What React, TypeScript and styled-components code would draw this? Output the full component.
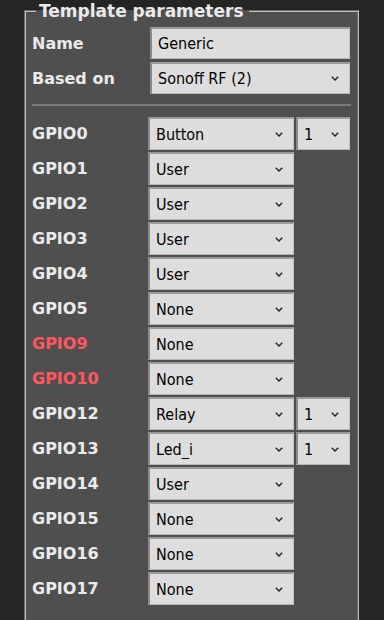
import React from "react";
import styled, { createGlobalStyle } from "styled-components";

const GlobalStyle = createGlobalStyle`
  html, body {
    margin: 0;
    padding: 0;
    background: #252525;
  }
  body {
    font-family: "DejaVu Sans", Verdana, sans-serif;
    color: #eaeaea;
  }
`;

type Gpio = { name: string; value: string; index?: string; warn?: boolean };

const gpios: Gpio[] = [
  { name: "GPIO0", value: "Button", index: "1" },
  { name: "GPIO1", value: "User" },
  { name: "GPIO2", value: "User" },
  { name: "GPIO3", value: "User" },
  { name: "GPIO4", value: "User" },
  { name: "GPIO5", value: "None" },
  { name: "GPIO9", value: "None", warn: true },
  { name: "GPIO10", value: "None", warn: true },
  { name: "GPIO12", value: "Relay", index: "1" },
  { name: "GPIO13", value: "Led_i", index: "1" },
  { name: "GPIO14", value: "User" },
  { name: "GPIO15", value: "None" },
  { name: "GPIO16", value: "None" },
  { name: "GPIO17", value: "None" },
];

const Page = styled.div`
  padding: 1px 25px 0 24px;
  height: 620px;
  overflow: hidden;
  box-sizing: border-box;
`;

const Fieldset = styled.fieldset`
  margin: 0;
  padding: 6px 6px 20px 6px;
  background: #4f4f4f;
  border: 2px groove #c0c0c0;
  min-height: 640px;
`;

const Legend = styled.legend`
  margin-left: 4px;
  padding: 0 5px 0 3px;
  font-weight: bold;
  font-size: 17px;
  color: #eaeaea;
  line-height: 20px;
`;

const Row = styled.div`
  display: flex;
  align-items: center;
  gap: 2px;
  height: 33px;
  margin-bottom: 2px;
`;

const TopRow = styled(Row)`
  height: 32px;
  margin-bottom: 3px;
`;

const Label = styled.div<{ $warn?: boolean; $wide?: boolean }>`
  box-sizing: border-box;
  width: ${(p) => (p.$wide ? "116px" : "114px")};
  flex: none;
  font-weight: bold;
  font-size: 16px;
  color: ${(p) => (p.$warn ? "#ff5661" : "#eaeaea")};
`;

const Field = styled.input`
  box-sizing: border-box;
  width: 200px;
  height: 32px;
  margin: 0;
  padding: 0 6px;
  background: #dddddd;
  border: none;
  border-top: 2px solid #9a9a9a;
  border-left: 2px solid #8a8a8a;
  border-bottom: 1px solid #b4b4b4;
  border-right: 1px solid #c4c4c4;
  font-family: "DejaVu Sans Condensed", "Liberation Sans", sans-serif;
  font-size: 16px;
  color: #000;
  outline: none;
`;

const SelectWrap = styled.div<{ $width: number }>`
  position: relative;
  flex: none;
  width: ${(p) => p.$width}px;
  height: 100%;
`;

const Select = styled.select`
  box-sizing: border-box;
  appearance: none;
  width: 100%;
  height: 100%;
  margin: 0;
  padding: 0 6px 0 6px;
  background: #dddddd;
  border: none;
  border-top: 2px solid #9a9a9a;
  border-left: 2px solid #8a8a8a;
  border-bottom: 1px solid #b4b4b4;
  border-right: 1px solid #c4c4c4;
  font-family: "DejaVu Sans Condensed", "Liberation Sans", sans-serif;
  font-size: 16px;
  color: #000;
  outline: none;
`;

const Chevron = styled.svg`
  position: absolute;
  right: 11px;
  top: 50%;
  margin-top: -2px;
  pointer-events: none;
`;

const Rule = styled.hr`
  margin: 10px 0 11px 0;
  border: none;
  border-top: 2px solid #7a7a7a;
`;

const Drop = ({ width, value }: { width: number; value: string }) => (
  <SelectWrap $width={width}>
    <Select value={value} onChange={() => {}}>
      <option>{value}</option>
    </Select>
    <Chevron width="8" height="5" viewBox="0 0 8 5">
      <path d="M0.8 0.8 L4 4 L7.2 0.8" fill="none" stroke="#222" strokeWidth="1.4" />
    </Chevron>
  </SelectWrap>
);

export default function App() {
  return (
    <>
      <GlobalStyle />
      <Page>
        <Fieldset>
          <Legend>Template parameters</Legend>
          <TopRow>
            <Label $wide>Name</Label>
            <Field value="Generic" onChange={() => {}} />
          </TopRow>
          <TopRow>
            <Label $wide>Based on</Label>
            <Drop width={200} value="Sonoff RF (2)" />
          </TopRow>
          <Rule />
          {gpios.map((g) => (
            <Row key={g.name}>
              <Label $warn={g.warn}>{g.name}</Label>
              <Drop width={146} value={g.value} />
              {g.index && <Drop width={54} value={g.index} />}
            </Row>
          ))}
        </Fieldset>
      </Page>
    </>
  );
}
